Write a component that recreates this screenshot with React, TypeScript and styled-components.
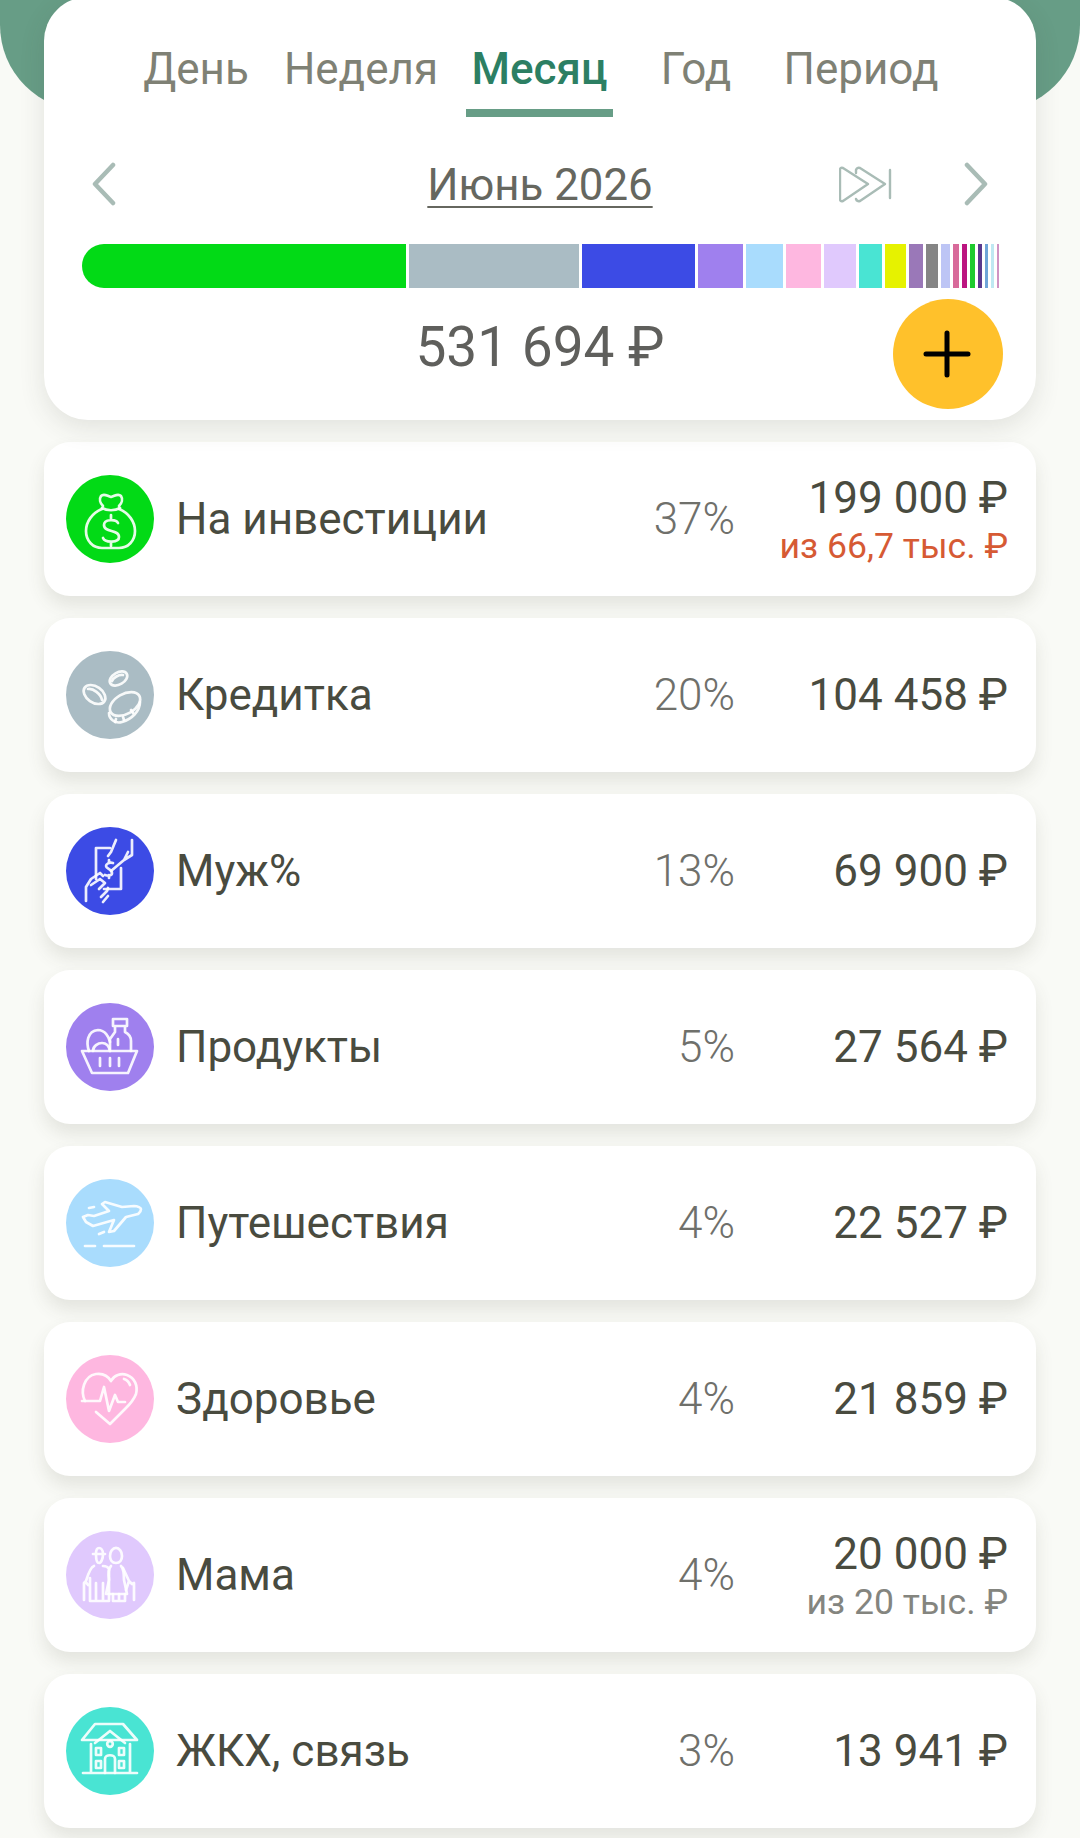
import React from "react";
import styled, { createGlobalStyle } from "styled-components";

const Global = createGlobalStyle`
  html, body { margin: 0; padding: 0; background: #f9faf6; }
  body { font-family: Roboto, "Noto Sans", sans-serif; }
`;

const Page = styled.div`
  width: 1080px;
  height: 1838px;
  overflow: hidden;
  background: #f9faf6;
`;
const GreenHeader = styled.div`
  height: 111px;
  background: #679d86;
  border-radius: 0 0 86px 86px;
`;
const Content = styled.div`
  margin-top: -114px;
  padding: 0 44px;
  display: flex;
  flex-direction: column;
  gap: 22px;
`;
const Panel = styled.section`
  height: 423px;
  background: #fff;
  border-radius: 44px;
  box-shadow: 0 8px 26px rgba(60, 60, 50, 0.12);
  display: flex;
  flex-direction: column;
  box-sizing: border-box;
  padding-top: 3px;
  position: relative;
`;
const Tabs = styled.nav`
  height: 117px;
  display: flex;
  padding-left: 92px;
`;
const Tab = styled.div<{ $w: number; $active?: boolean }>`
  flex: 0 0 ${(p) => p.$w}px;
  display: flex;
  justify-content: center;
  box-sizing: border-box;
  padding-top: 43px;
  height: 117px;
  font-size: 44px;
  line-height: 52px;
  font-weight: ${(p) => (p.$active ? 500 : 400)};
  color: ${(p) => (p.$active ? "#2c7f63" : "#7f8175")};
  border-bottom: 8px solid ${(p) => (p.$active ? "#679d86" : "transparent")};
`;
const MonthRow = styled.div`
  height: 72px;
  margin-top: 31px;
  display: grid;
  grid-template-columns: 1fr auto 1fr;
  align-items: center;
  padding: 0 45px 0 45px;
`;
const MonthLabel = styled.div`
  font-size: 43.8px;
  line-height: 50px;
  padding-top: 2px;
  color: #66675f;
  text-decoration: underline;
  text-decoration-thickness: 2px;
  text-underline-offset: 6px;
`;
const MonthLeft = styled.div`
  display: flex;
`;
const MonthRight = styled.div`
  display: flex;
  justify-content: flex-end;
  align-items: center;
  gap: 71px;
`;
const Bar = styled.div`
  display: flex;
  gap: 3px;
  height: 44px;
  margin: 24px 0 0 38px;
`;
const Seg = styled.div<{ $w: number; $c: string; $first?: boolean }>`
  flex: 0 0 ${(p) => p.$w}px;
  background: ${(p) => p.$c};
  border-radius: ${(p) => (p.$first ? "22px 0 0 22px" : "0")};
`;
const TotalRow = styled.div`
  position: relative;
  text-align: center;
  font-size: 55px;
  line-height: 64px;
  margin-top: 27px;
  color: #5f5f5c;
`;
const AddButton = styled.button`
  position: absolute;
  left: 849px;
  top: -16px;
  width: 110px;
  height: 110px;
  border: 0;
  padding: 0 2px 0 0;
  border-radius: 50%;
  background: #ffc12b;
  display: flex;
  align-items: center;
  justify-content: center;
`;
const Card = styled.article`
  height: 154px;
  box-sizing: border-box;
  background: #fff;
  border-radius: 26px;
  box-shadow: 0 10px 18px rgba(70, 70, 55, 0.12);
  display: flex;
  align-items: center;
  padding: 0 28px 0 22px;
`;
const IconCircle = styled.div<{ $c: string }>`
  flex: 0 0 88px;
  height: 88px;
  border-radius: 50%;
  background: ${(p) => p.$c};
  margin-right: 22px;
`;
const Name = styled.div`
  flex: 1;
  font-size: 44px;
  color: #494b3f;
`;
const Percent = styled.div`
  font-size: 44px;
  font-weight: 300;
  color: #6f706b;
  width: 90px;
  text-align: right;
`;
const AmountCol = styled.div`
  width: 273px;
  text-align: right;
  display: flex;
  flex-direction: column;
`;
const Amount = styled.div`
  font-size: 44px;
  line-height: 52px;
  color: #494b3f;
`;
const Sub = styled.div<{ $over?: boolean }>`
  font-size: 35.6px;
  line-height: 42px;
  margin: 1px 0 -1px;
  color: ${(p) => (p.$over ? "#d65a34" : "#84857f")};
`;

const Ic = ({ children }: { children: React.ReactNode }) => (
  <svg width="88" height="88" viewBox="0 0 88 88" fill="none" stroke="#fff" strokeOpacity={0.9} strokeWidth={2.7} strokeLinecap="round" strokeLinejoin="round">
    {children}
  </svg>
);

const BagIcon = () => (
  <Ic>
    <path d="M36 34C26 38 20 47 20 56c0 10 7 17 16 17h17c9 0 16-7 16-17 0-9-6-18-16-22" />
    <path d="M37 31c-3-3-4-7-2-10 3-3 6 0 10 1 4-1 7-4 10-1 2 3 1 7-2 10" />
    <path d="M36 33c5 3 13 3 18 0" />
    <path d="M52 48c-2-4-14-4-14 2 0 8 15 4 15 12 0 6-14 6-16 1M45 40v4M45 67v4" />
  </Ic>
);
const CoinsIcon = () => (
  <Ic>
    <ellipse cx="52.5" cy="27.5" rx="9.5" ry="6" transform="rotate(-30 52.5 27.5)" />
    <path d="M46 30c1-3 7-7 11-6" />
    <ellipse cx="28.5" cy="43.5" rx="12" ry="8" transform="rotate(35 28.5 43.5)" />
    <path d="M22 38c5-1 13 5 14 11" />
    <ellipse cx="59" cy="53" rx="16.5" ry="10" transform="rotate(-30 59 53)" />
    <path d="M43 62c0 6 6 11 13 9 10-3 18-11 18-20" />
    <path d="M49 71l1-3M58 69l-1-3M67 62l-2-3" />
  </Ic>
);
const HandsIcon = () => (
  <Ic>
    <path d="M44 21H30v31M38 62h17V41" />
    <path d="M66 13v15l-8 5-13 11M50 13l-5 12-3 4M62 25l-4 8" />
    <path d="M47 36c-4-1-7 1-7 3 0 3 6 3 6 7 0 3-4 3-7 2M43 33v3M43 48v3" />
    <path d="M20 74V60l5-8 9-6 3 3M25 58l9-6 5 4-6 6M35 70l6-6 1-3M37 75l5-6" />
  </Ic>
);
const BasketIcon = () => (
  <Ic>
    <path d="M16 48h55l-9 22H26z" />
    <path d="M34 55v8M44 55v8M53 55v8" />
    <path d="M47 16h14v7H47zM49 23v6l-5 7v12M59 23v6c4 2 6 5 6 9v10" />
    <path d="M23 48c-3-8-2-20 9-21 7 0 11 7 12 12" />
    <path d="M27 48c0-5 5-8 9-8 4 0 7 3 8 8" />
    <path d="M52 36v6" />
  </Ic>
);
const PlaneIcon = () => (
  <Ic>
    <path d="M17 38l5-2 6 1 15-5-7-7 3-2 17 5 12-1c4 0 7 2 7 3 0 3-2 4-3 5l-12 3-12 14-5 1 5-12-21 6-7-4z" />
    <path d="M23 29l5-1M33 55l5-2" />
    <path d="M19 67h10M38 67h30" />
  </Ic>
);
const HeartIcon = () => (
  <Ic>
    <path d="M19 46c-5-10-1-25 11-27 7-1 12 2 15 7 3-6 10-8 16-6 8 3 11 11 9 19-3 8-9 13-13 17L44 69 30 57" />
    <path d="M16 46h18l4-14 5 24 6-16 3 7h7" />
    <path d="M58 24c3 1 5 3 6 6" />
  </Ic>
);
const ElderIcon = () => (
  <Ic>
    <path d="M27 23h12M30 23c0-4 1-6 3-6s4 2 4 6M30 23c0 5 1 9 3 9s4-4 4-9" />
    <path d="M28 35c-3 1-5 5-8 15l-2 2v17M18 52c2-1 3 0 4 2M24 47v23h6V52M30 70h7V52M37 70h6V38c-1-2-3-3-6-3" />
    <path d="M44 25c0-5 3-8 6-8s6 3 6 8c0 4-2 7-6 7s-6-3-6-7zM46 19c2-3 6-3 8 0" />
    <path d="M45 35c-2 2-3 7-2 14l-3 14h21l-3-14c0-6 0-11-3-14" />
    <path d="M47 63v7h6v-7M53 70h6v-7" />
    <path d="M57 37l6 13 3 3 2-1v17M63 50l-3 9" />
  </Ic>
);
const HouseIcon = () => (
  <Ic>
    <path d="M16 33l13-16h28l14 16z" />
    <path d="M17 66h54M25 37v29M64 37v29" />
    <path d="M29 36l15-12 15 12" />
    <circle cx="44" cy="37" r="2.8" />
    <path d="M39 66V52c0-5 10-5 10 0v14" />
    <rect x="30" y="41" width="5" height="7" />
    <rect x="53" y="41" width="5" height="7" />
    <rect x="30" y="54" width="5" height="7" />
    <rect x="53" y="54" width="5" height="7" />
  </Ic>
);

const ChevronLeft = () => (
  <svg width="28" height="44" viewBox="0 0 28 44" fill="none" stroke="#a9bcb6" strokeWidth="4.5" strokeLinecap="round" strokeLinejoin="round">
    <path d="M24 3L6 22l18 19" />
  </svg>
);
const ChevronRight = () => (
  <svg width="28" height="44" viewBox="0 0 28 44" fill="none" stroke="#a9bcb6" strokeWidth="4.5" strokeLinecap="round" strokeLinejoin="round">
    <path d="M4 3l18 19L4 41" />
  </svg>
);
const SkipIcon = () => (
  <svg width="53" height="38" viewBox="0 0 53 38" fill="none" stroke="#a9bcb6" strokeWidth="2.4" strokeLinecap="round" strokeLinejoin="round">
    <path d="M4 3l25 16L4 36q-3 1-3-2V5q0-3 3-2z" />
    <path d="M17 8V5q1-3 4-2l25 16-25 17q-3 1-4-2" />
    <path d="M51 5v28" />
  </svg>
);

const segs: [number, string][] = [
  [324, "#02da16"], [170, "#aabcc4"], [113, "#3c4be5"], [45, "#9f80ee"], [37, "#a9dcfd"], [35, "#feb7e0"],
  [32, "#e0c9fd"], [23, "#49e4d3"], [21, "#e6f200"], [14, "#9a78b8"], [12, "#858585"], [9, "#bdc5f5"],
  [6, "#d86a9a"], [5, "#bc1480"], [5, "#1ecb2e"], [4, "#5a3a8e"], [3, "#6fa5d8"], [3, "#bfe8f2"], [2, "#cf94c4"],
];

const tabs: [string, number, boolean?][] = [
  ["День", 120],
  ["Неделя", 210],
  ["Месяц", 147, true],
  ["Год", 166],
  ["Период", 164],
];

type Row = { name: string; pct: string; amount: string; sub?: string; over?: boolean; color: string; icon: React.ReactNode };
const rows: Row[] = [
  { name: "На инвестиции", pct: "37%", amount: "199 000 ₽", sub: "из 66,7 тыс. ₽", over: true, color: "#02da16", icon: <BagIcon /> },
  { name: "Кредитка", pct: "20%", amount: "104 458 ₽", color: "#aabcc4", icon: <CoinsIcon /> },
  { name: "Муж%", pct: "13%", amount: "69 900 ₽", color: "#3c4be5", icon: <HandsIcon /> },
  { name: "Продукты", pct: "5%", amount: "27 564 ₽", color: "#9f80ee", icon: <BasketIcon /> },
  { name: "Путешествия", pct: "4%", amount: "22 527 ₽", color: "#a9dcfd", icon: <PlaneIcon /> },
  { name: "Здоровье", pct: "4%", amount: "21 859 ₽", color: "#feb7e0", icon: <HeartIcon /> },
  { name: "Мама", pct: "4%", amount: "20 000 ₽", sub: "из 20 тыс. ₽", color: "#e0c9fd", icon: <ElderIcon /> },
  { name: "ЖКХ, связь", pct: "3%", amount: "13 941 ₽", color: "#49e4d3", icon: <HouseIcon /> },
];

export default function App() {
  return (
    <Page>
      <Global />
      <GreenHeader />
      <Content>
        <Panel>
          <Tabs>
            {tabs.map(([t, w, a]) => (
              <Tab key={t} $w={w} $active={a}>{t}</Tab>
            ))}
          </Tabs>
          <MonthRow>
            <MonthLeft><ChevronLeft /></MonthLeft>
            <MonthLabel>Июнь 2026</MonthLabel>
            <MonthRight><SkipIcon /><ChevronRight /></MonthRight>
          </MonthRow>
          <Bar>
            {segs.map(([w, c], i) => (
              <Seg key={i} $w={w} $c={c} $first={i === 0} />
            ))}
          </Bar>
          <TotalRow>
            531 694 ₽
            <AddButton aria-label="add">
              <svg width="48" height="48" viewBox="0 0 48 48" stroke="#000" strokeWidth="5" strokeLinecap="round">
                <path d="M24 3v42M3 24h42" />
              </svg>
            </AddButton>
          </TotalRow>
        </Panel>
        {rows.map((r) => (
          <Card key={r.name}>
            <IconCircle $c={r.color}>{r.icon}</IconCircle>
            <Name>{r.name}</Name>
            <Percent>{r.pct}</Percent>
            <AmountCol>
              <Amount>{r.amount}</Amount>
              {r.sub && <Sub $over={r.over}>{r.sub}</Sub>}
            </AmountCol>
          </Card>
        ))}
      </Content>
    </Page>
  );
}
